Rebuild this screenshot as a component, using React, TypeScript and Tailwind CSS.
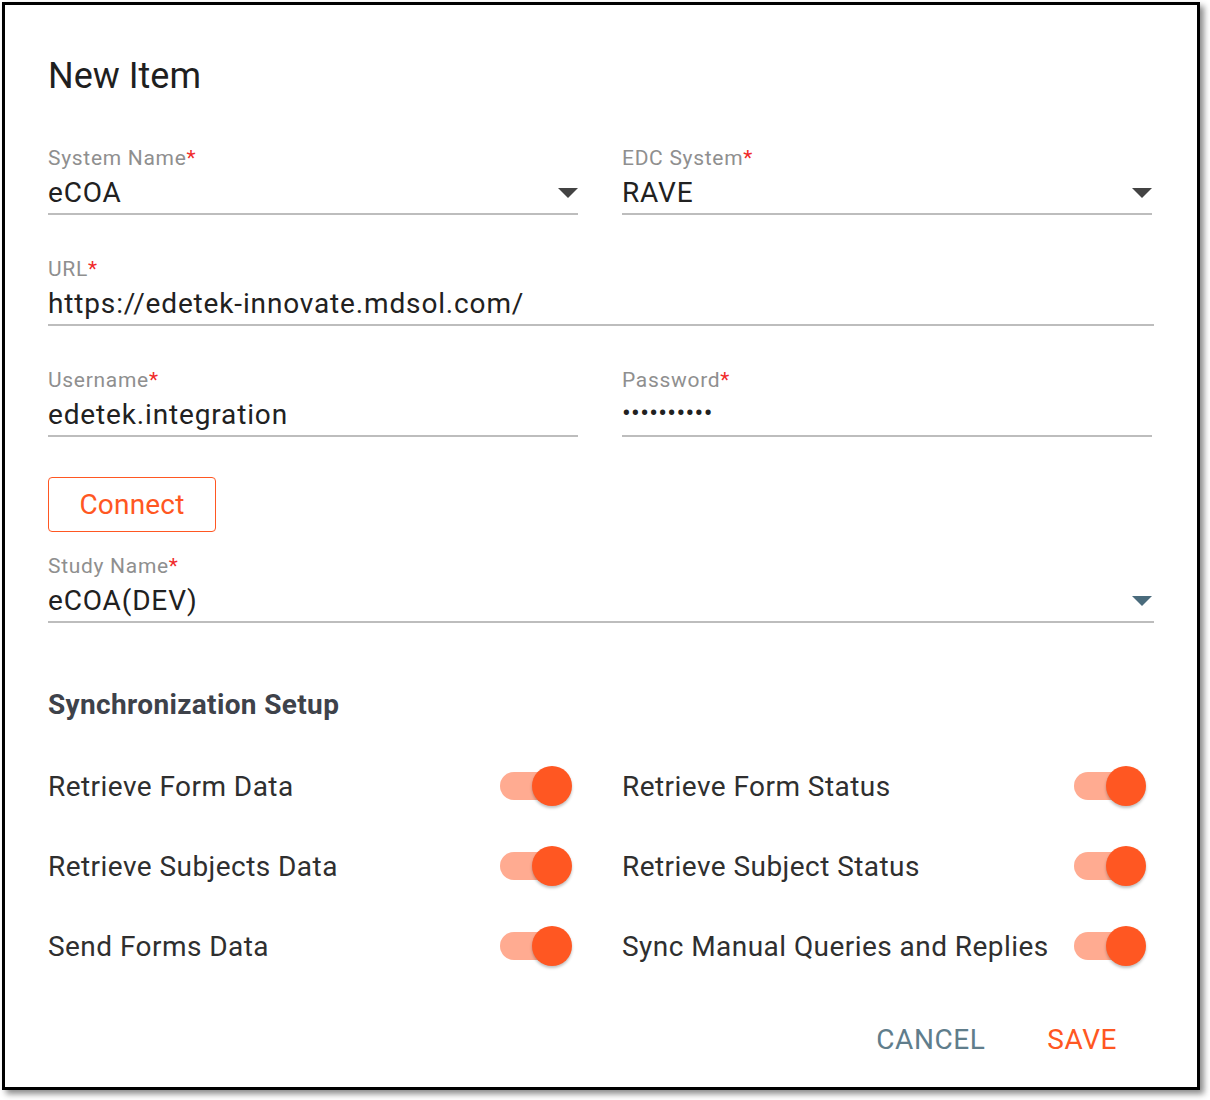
import React from "react";

const font = { fontFamily: "Roboto, 'Noto Sans', 'Liberation Sans', sans-serif" };

function Label({ text }: { text: string }) {
  return (
    <div className="h-[24px] leading-[24px] text-[21px] tracking-[0.7px] text-[#8f8f8f]">
      {text}
      <span className="text-[#f02b2b]">*</span>
    </div>
  );
}

function Caret({ color, inset = 0 }: { color: string; inset?: number }) {
  return (
    <svg width="20" height="10" viewBox="0 0 20 10" className="shrink-0 mt-[2px]" style={{ marginRight: inset }}>
      <path d="M0 0 L20 0 L10 10 Z" fill={color} />
    </svg>
  );
}

function Field({
  label,
  value,
  select,
  caretColor = "#434343",
  caretInset = 0,
}: {
  label: string;
  value: string;
  select?: boolean;
  caretColor?: string;
  caretInset?: number;
}) {
  return (
    <div className="flex flex-col">
      <Label text={label} />
      <div className="h-[43px] flex items-center justify-between border-b-2 border-[#bdbdbd] box-content">
        <span className="mt-[2px] text-[28px] text-[#212121] tracking-[0.85px]">{value}</span>
        {select && <Caret color={caretColor} inset={caretInset} />}
      </div>
    </div>
  );
}

function Toggle() {
  return (
    <div className="relative w-[72px] h-[40px] shrink-0 mr-[6px]">
      <div className="absolute left-0 top-[6px] w-[68px] h-[28px] rounded-full bg-[#ffab91]" />
      <div className="absolute right-0 top-0 w-[40px] h-[40px] rounded-full bg-[#ff5722] shadow-[0_2px_3px_rgba(0,0,0,0.25)]" />
    </div>
  );
}

function ToggleRow({ label }: { label: string }) {
  return (
    <div className="h-[80px] flex items-center justify-between">
      <span className="mt-[1px] text-[28px] text-[#2f2f2f] tracking-[0.45px]">{label}</span>
      <Toggle />
    </div>
  );
}

export default function App() {
  return (
    <div className="w-[1210px] h-[1100px] bg-white" style={font}>
      <div className="ml-[2px] mt-[2px] w-[1198px] h-[1088px] border-[3px] border-black bg-white shadow-[4px_4px_6px_rgba(0,0,0,0.45)] px-[43px]">
        <div className="pt-[51px] h-[90px] leading-[40px] text-[36px] text-[#1f1f1f]">New Item</div>

        <div className="mt-[51px] grid grid-cols-[530px_530px] gap-x-[44px]">
          <Field label="System Name" value="eCOA" select />
          <Field label="EDC System" value="RAVE" select />
        </div>

        <div className="mt-[42px]">
          <Field label="URL" value="https://edetek-innovate.mdsol.com/" />
        </div>

        <div className="mt-[42px] grid grid-cols-[530px_530px] gap-x-[44px]">
          <Field label="Username" value="edetek.integration" />
          <div className="flex flex-col">
            <Label text="Password" />
            <div className="h-[43px] flex items-center border-b-2 border-[#bdbdbd] box-content">
              <span className="text-[26px] text-[#212121] tracking-[0.3px]">••••••••••</span>
            </div>
          </div>
        </div>

        <button className="mt-[40px] w-[168px] h-[55px] rounded-[4px] border-[1.5px] border-[#ff5722] text-[#ff5722] text-[28px] tracking-[0.2px] flex items-center justify-center">
          Connect
        </button>

        <div className="mt-[22px]">
          <Field label="Study Name" value="eCOA(DEV)" select caretColor="#4a6b7c" caretInset={2} />
        </div>

        <div className="mt-[64px] h-[36px] leading-[36px] text-[28px] font-bold tracking-[0.35px] text-[#3e424a]">
          Synchronization Setup
        </div>

        <div className="mt-[23px] grid grid-cols-[530px_530px] gap-x-[44px]">
          <ToggleRow label="Retrieve Form Data" />
          <ToggleRow label="Retrieve Form Status" />
          <ToggleRow label="Retrieve Subjects Data" />
          <ToggleRow label="Retrieve Subject Status" />
          <ToggleRow label="Send Forms Data" />
          <ToggleRow label="Sync Manual Queries and Replies" />
        </div>

        <div className="mt-[22px] flex justify-end pr-[23px] gap-[34px]">
          <button className="h-[64px] px-[14px] text-[28px] uppercase tracking-[0.02em] text-[#607d8b]">Cancel</button>
          <button className="h-[64px] px-[14px] text-[28px] uppercase tracking-[0.02em] text-[#ff5722]">Save</button>
        </div>
      </div>
    </div>
  );
}
